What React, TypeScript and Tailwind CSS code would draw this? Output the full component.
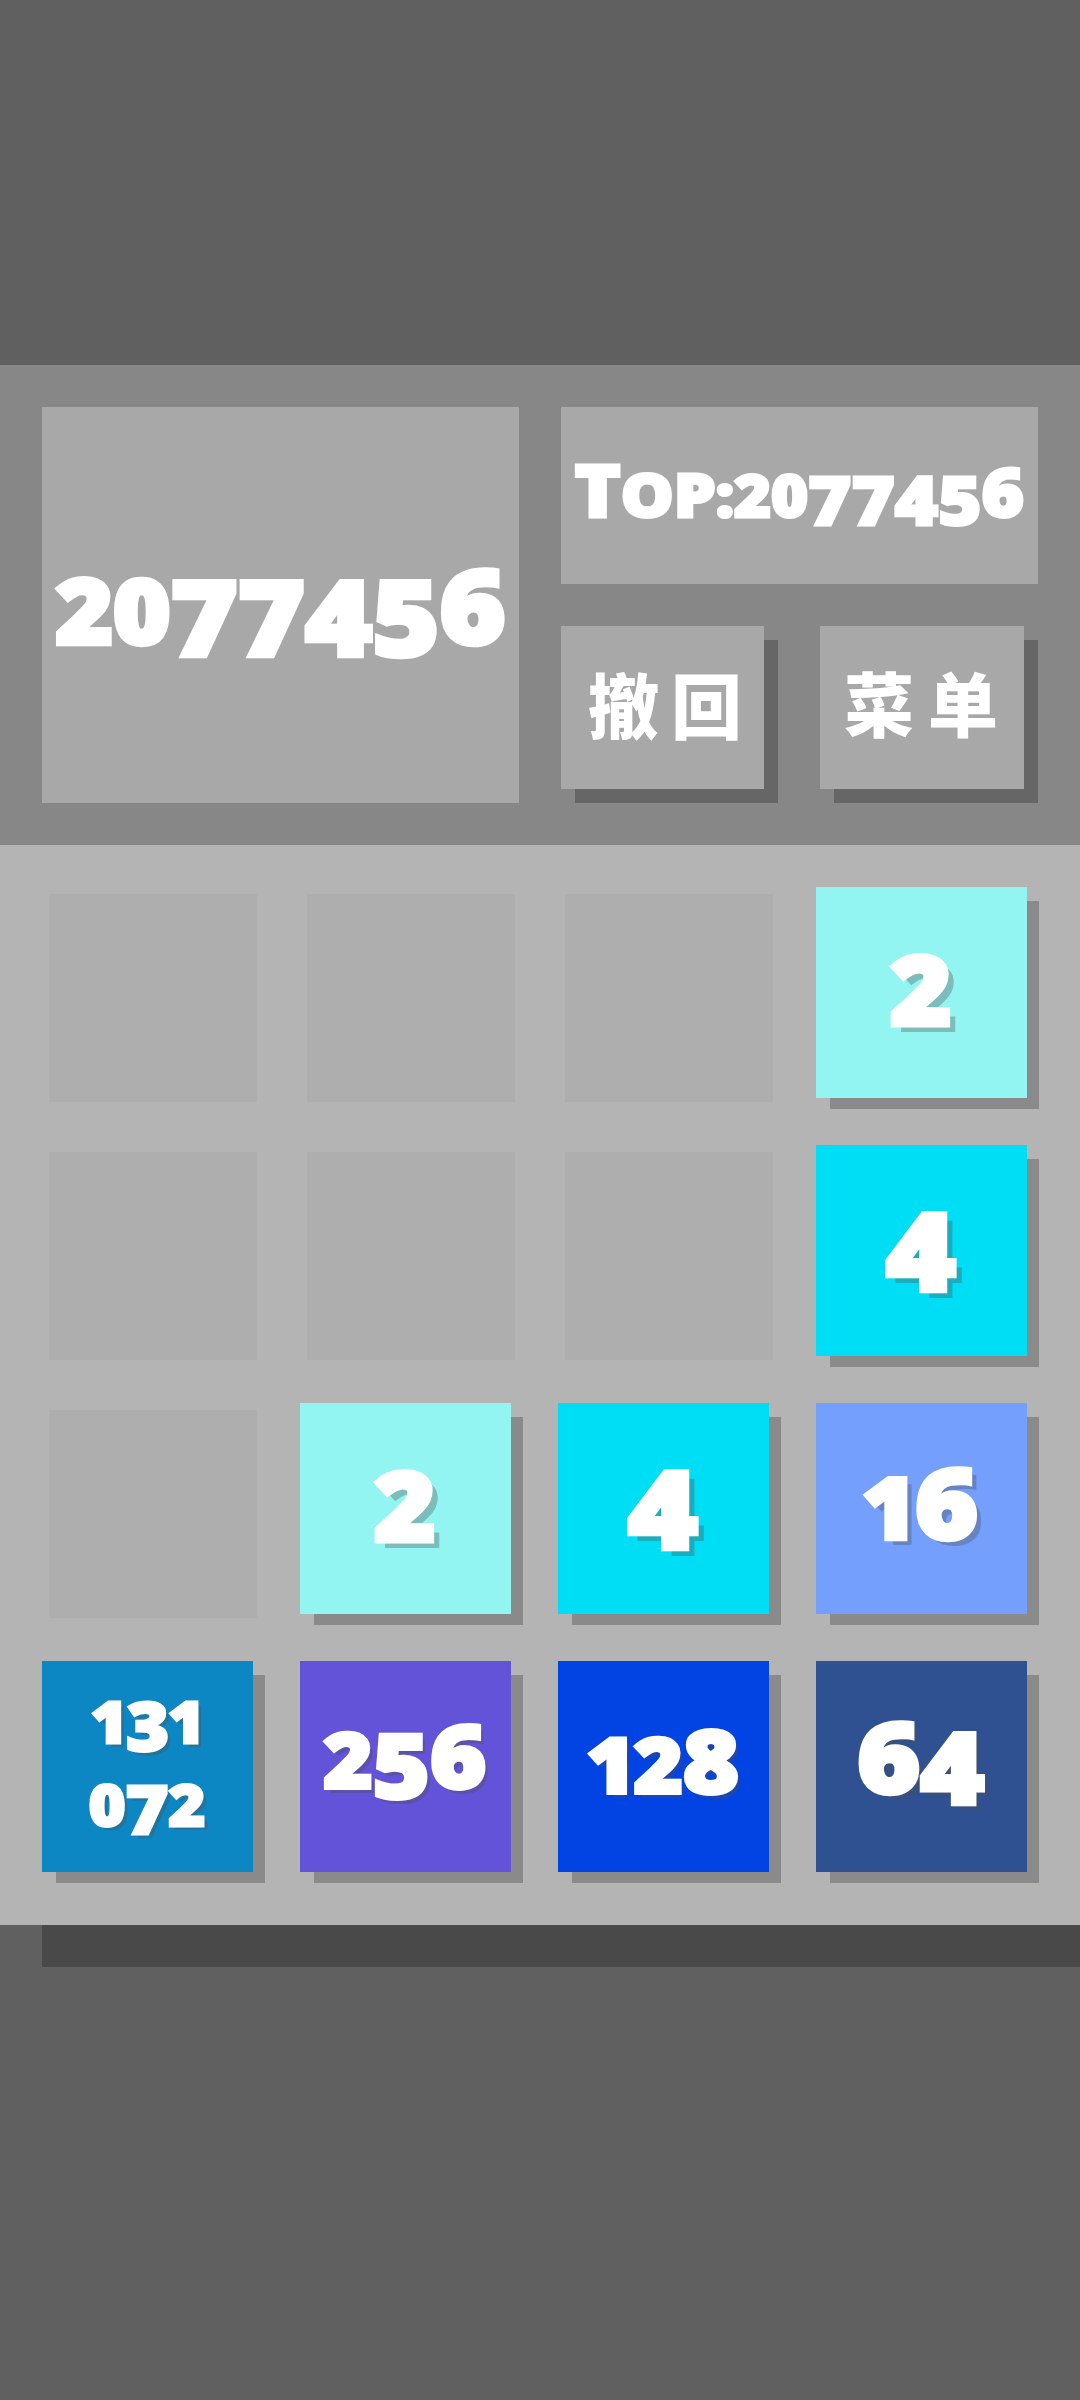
import clsx from "clsx";

type TileData = {
  lines: string[];
  color: string;
  text: string;
};

const TWO: TileData = {
  lines: ["2"],
  color: "bg-[#93f5f2]",
  text: "text-[95px] leading-[95px] pb-[7px] [text-shadow:7px_7px_rgb(80_80_80/0.34)]"
};

const FOUR: TileData = {
  lines: ["4"],
  color: "bg-[#00def6]",
  text: "text-[93px] leading-[93px] pb-[15px] [text-shadow:7px_7px_rgb(80_80_80/0.34)]"
};

const BOARD: (TileData | null)[] = [
  null, null, null, TWO,
  null, null, null, FOUR,
  null, TWO, FOUR,
  {
    lines: ["16"],
    color: "bg-[#749ffc]",
    text: "text-[85px] leading-[85px] pb-[4px] [text-shadow:6px_6px_rgb(80_80_80/0.34)]"
  },
  {
    lines: ["131", "072"],
    color: "bg-[#0c87c4]",
    text: "text-[57px] leading-[83px] pb-[6px] [text-shadow:4px_4px_rgb(80_80_80/0.34)]"
  },
  {
    lines: ["256"],
    color: "bg-[#6253d8]",
    text: "text-[76px] leading-[76px] pb-[14px] [text-shadow:4px_5px_rgb(80_80_80/0.34)]"
  },
  {
    lines: ["128"],
    color: "bg-[#0243e4]",
    text: "text-[76px] leading-[76px] pb-[4px] [text-shadow:4px_5px_rgb(80_80_80/0.34)]"
  },
  {
    lines: ["64"],
    color: "bg-[#2f5191]",
    text: "text-[85px] leading-[85px] pb-[12px] [text-shadow:5px_5px_rgb(80_80_80/0.34)]"
  }
];

// Old-style figures: 3 4 5 7 9 hang below the baseline, 6 and 8 rise above it.
function Digits({ value }: { value: string }) {
  return (
    <>
      {value.split("").map((char, i) => (
        <span
          key={i}
          className={clsx(
            "leading-[0]",
            "34579".includes(char) && "align-[-0.115em] text-[1.17em]",
            "68".includes(char) && "text-[1.15em]",
            char === "1" && "-mx-[0.02em]"
          )}
        >
          {char}
        </span>
      ))}
    </>
  );
}

function Tile({ tile }: { tile: TileData }) {
  return (
    <div className="grid h-[258px] w-[258px] items-start justify-items-start">
      <div className="col-start-1 row-start-1 ml-[14px] mt-[14px] h-[208px] w-[209px] bg-[#8a8a8a]" />
      <div
        className={clsx(
          "col-start-1 row-start-1 flex h-[210.5px] w-[210.5px] flex-col items-center justify-center",
          "[-webkit-text-stroke:0.05em_white]",
          tile.color,
          tile.text
        )}
      >
        {tile.lines.map((line) => (
          <div key={line} className="scale-x-[1.1] whitespace-nowrap">
            <Digits value={line} />
          </div>
        ))}
      </div>
    </div>
  );
}

function EmptyCell() {
  return (
    <div className="h-[258px] w-[258px] p-[7px]">
      <div className="h-[208px] w-[208px] bg-[#aeaeae]" />
    </div>
  );
}

function ActionButton({ label, className }: { label: string; className: string }) {
  return (
    <button
      type="button"
      className={clsx(
        "flex h-[163px] items-center justify-center bg-[#a8a8a8] pb-[11px] font-black leading-none shadow-[14px_14px_#666666]",
        "font-['Noto_Sans_CJK_SC',sans-serif]",
        className
      )}
    >
      {label}
    </button>
  );
}

export default function App() {
  return (
    <div className="h-[2400px] w-[1080px] overflow-hidden bg-[#606060] pt-[365px] font-['Open_Sans',sans-serif] font-extrabold text-white">
      <header className="flex h-[480px] gap-[42px] bg-[#878787] p-[42px]">
        <div className="flex h-[396px] w-[477px] items-center justify-center bg-[#a8a8a8] pt-[7px] text-[90px] leading-[90px] [-webkit-text-stroke:0.05em_white]">
          <div className="scale-x-[1.09] whitespace-nowrap">
            <Digits value="2077456" />
          </div>
        </div>
        <div className="flex w-[477px] flex-col gap-[42px]">
          <div className="flex h-[177px] items-center justify-center bg-[#a8a8a8] pb-[1px] text-[58px] leading-[58px] [-webkit-text-stroke:0.05em_white]">
            <div className="scale-x-[1.09] whitespace-nowrap">
              <span className="text-[1.24em] leading-[0]">T</span>
              <span className="text-[1.5em] leading-[0] [font-variant-caps:small-caps]">op</span>
              :
              <Digits value="2077456" />
            </div>
          </div>
          <div className="flex gap-[56px]">
            <ActionButton label="撤回" className="w-[203px] pl-[17px] text-[71px] tracking-[12px]" />
            <ActionButton label="菜单" className="w-[204px] pl-[12px] text-[70px] tracking-[14px]" />
          </div>
        </div>
      </header>

      <main className="grid h-[1080px] grid-cols-[repeat(4,258px)] content-start bg-[#b4b4b4] pl-[42px] pt-[42px]">
        {BOARD.map((tile, i) => (tile ? <Tile key={i} tile={tile} /> : <EmptyCell key={i} />))}
      </main>
      <div className="ml-[42px] h-[42px] bg-[#494949]" />
    </div>
  );
}
